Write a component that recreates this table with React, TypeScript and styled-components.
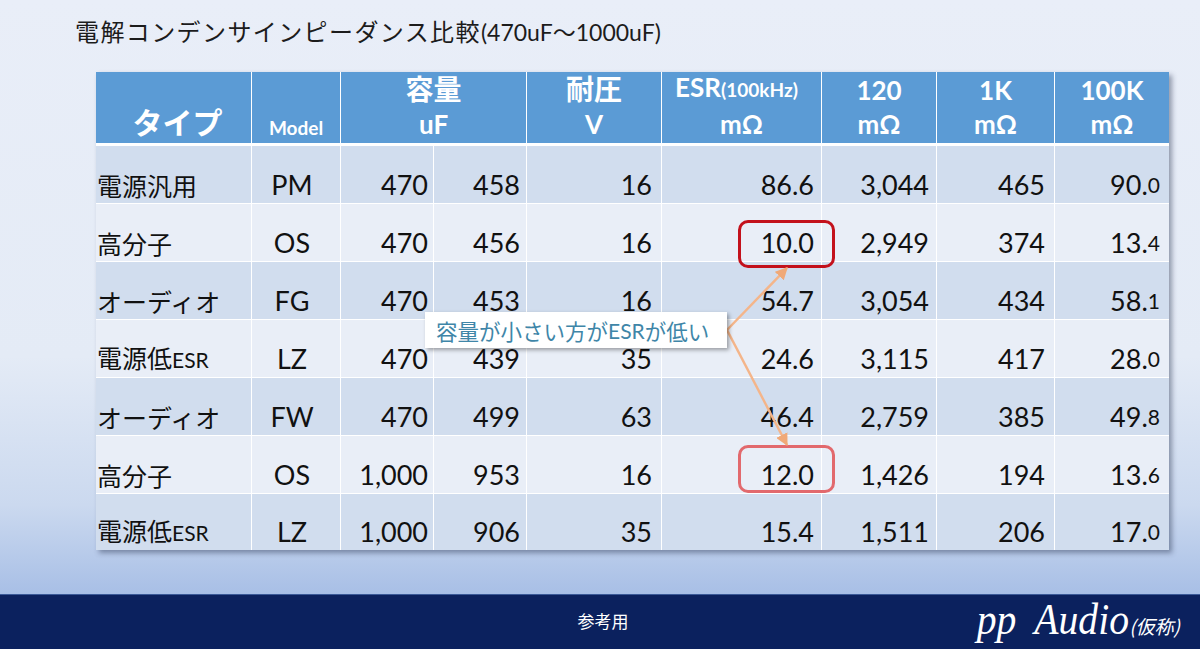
import React from "react";
import styled, { createGlobalStyle } from "styled-components";

const GlobalStyle = createGlobalStyle`
  html, body { margin: 0; padding: 0; }
  body { width: 1200px; height: 649px; overflow: hidden; background: #0b215e; }
  #root { width: 1200px; height: 649px; }
`;

const Slide = styled.div`
  width: 1200px;
  height: 649px;
  display: flex;
  flex-direction: column;
  font-family: Lato, "Noto Sans CJK JP", sans-serif;
`;

const Main = styled.main`
  height: 594px;
  box-sizing: border-box;
  padding: 14px 0 0 75px;
  background: linear-gradient(
    to bottom,
    #e9eef8 0%,
    #e4ebf6 60%,
    #cbd9ef 85%,
    #a8bfe6 100%
  );
`;

const Title = styled.h1`
  margin: 0;
  height: 34px;
  font-family: "Noto Sans CJK JP", sans-serif;
  font-weight: 400;
  font-size: 24px;
  letter-spacing: 1.4px;
  line-height: 34px;
  color: #1c1c1c;
`;

const TitleLatin = styled.span`
  font-family: Lato, "Noto Sans CJK JP", sans-serif;
  font-size: 23px;
  letter-spacing: 0;
`;

const TableWrap = styled.div`
  position: relative;
  margin: 24px 0 0 21px;
  width: 1073px;
`;

const Grid = styled.div`
  display: grid;
  grid-template-columns: 155px 88px 92px 92px 134px 159px 114px 117px 114px;
  grid-template-rows: 73px repeat(6, 57px) 56px;
  gap: 1px;
  background: #ffffff;
  box-shadow: 3px 3px 5px rgba(40, 50, 80, 0.45);
`;

const HeadCell = styled.div<{ $span?: number }>`
  grid-column: span ${(p) => p.$span ?? 1};
  box-sizing: border-box;
  border-bottom: 2px solid #ffffff;
  background: #5b9bd5;
  color: #ffffff;
  font-weight: 700;
  display: flex;
  flex-direction: column;
  justify-content: flex-end;
  align-items: center;
  padding-bottom: 2px;
`;

const HeadLine = styled.div<{ $size?: number; $lh?: number; $shift?: number }>`
  font-size: ${(p) => p.$size ?? 26}px;
  line-height: ${(p) => p.$lh ?? 34}px;
  white-space: nowrap;
  transform: translateX(${(p) => p.$shift ?? 0}px);
`;

const HeadJp = styled.span<{ $size?: number }>`
  font-family: "Noto Sans CJK JP", sans-serif;
  font-size: ${(p) => p.$size ?? 28}px;
  font-weight: 700;
`;

const Small = styled.span<{ $size?: number }>`
  font-size: ${(p) => p.$size ?? 19}px;
`;

const Cell = styled.div<{ $dark: boolean; $align: "left" | "center" | "right"; $pad?: number }>`
  background: ${(p) => (p.$dark ? "#d1ddee" : "#e9eef7")};
  color: #111111;
  display: flex;
  align-items: flex-end;
  justify-content: ${(p) =>
    p.$align === "left" ? "flex-start" : p.$align === "center" ? "center" : "flex-end"};
  padding: ${(p) => (p.$align === "left" ? "0 0 4px 1px" : `0 ${p.$pad ?? 8}px 5px 0`)};
  box-sizing: border-box;
  font-size: 27px;
  line-height: 27px;
  white-space: nowrap;
`;

const TypeText = styled.span`
  font-family: "Noto Sans CJK JP", sans-serif;
  font-size: 25px;
  line-height: 27px;
`;

const TypeSmall = styled.span`
  font-family: Lato, sans-serif;
  font-size: 21px;
`;

const Decimal = styled.span`
  font-size: 21px;
`;

const Highlight = styled.div<{ $color: string; $left: number; $top: number }>`
  position: absolute;
  left: ${(p) => p.$left}px;
  top: ${(p) => p.$top}px;
  width: 97px;
  height: 48px;
  box-sizing: border-box;
  border: 3px solid ${(p) => p.$color};
  border-radius: 10px;
`;

const Callout = styled.div`
  position: absolute;
  left: 329px;
  top: 240px;
  width: 302px;
  height: 36px;
  box-sizing: border-box;
  background: #ffffff;
  box-shadow: 2px 2px 4px rgba(0, 0, 0, 0.35);
  padding-left: 11px;
  display: flex;
  align-items: center;
  font-family: "Noto Sans CJK JP", sans-serif;
  font-size: 21.5px;
  color: #3f86a8;
  white-space: nowrap;
`;

const CalloutLatin = styled.span`
  font-family: Lato, sans-serif;
  font-size: 21px;
`;

const ArrowLayer = styled.svg`
  position: absolute;
  left: 0;
  top: 0;
  pointer-events: none;
  overflow: visible;
`;

const Footer = styled.footer`
  height: 55px;
  box-sizing: border-box;
  border-top: 1px solid #3b5a98;
  background: #0b215e;
  display: grid;
  grid-template-columns: 1fr auto 1fr;
  align-items: center;
  color: #ffffff;
  padding-right: 20px;
`;

const FooterNote = styled.div`
  grid-column: 2;
  font-family: "Noto Sans CJK JP", sans-serif;
  font-size: 17px;
  padding-left: 26px;
  margin-top: -3px;
`;

const Brand = styled.div`
  grid-column: 3;
  justify-self: end;
  display: flex;
  align-items: baseline;
  margin-top: -6px;
`;

const BrandName = styled.span`
  font-family: "Liberation Serif", serif;
  font-style: italic;
  font-size: 45px;
  display: inline-block;
  transform: scaleX(0.88);
  transform-origin: right center;
  word-spacing: 10px;
`;

const BrandNote = styled.span`
  font-family: "Noto Sans CJK JP", sans-serif;
  font-size: 19px;
  font-style: italic;
`;

type Row = {
  type: string;
  typeSmall?: string;
  model: string;
  c1: string;
  c2: string;
  v: string;
  esr: string;
  z120: string;
  z1k: string;
  z100k: [string, string];
};

const rows: Row[] = [
  { type: "電源汎用", model: "PM", c1: "470", c2: "458", v: "16", esr: "86.6", z120: "3,044", z1k: "465", z100k: ["90.", "0"] },
  { type: "高分子", model: "OS", c1: "470", c2: "456", v: "16", esr: "10.0", z120: "2,949", z1k: "374", z100k: ["13.", "4"] },
  { type: "オーディオ", model: "FG", c1: "470", c2: "453", v: "16", esr: "54.7", z120: "3,054", z1k: "434", z100k: ["58.", "1"] },
  { type: "電源低", typeSmall: "ESR", model: "LZ", c1: "470", c2: "439", v: "35", esr: "24.6", z120: "3,115", z1k: "417", z100k: ["28.", "0"] },
  { type: "オーディオ", model: "FW", c1: "470", c2: "499", v: "63", esr: "46.4", z120: "2,759", z1k: "385", z100k: ["49.", "8"] },
  { type: "高分子", model: "OS", c1: "1,000", c2: "953", v: "16", esr: "12.0", z120: "1,426", z1k: "194", z100k: ["13.", "6"] },
  { type: "電源低", typeSmall: "ESR", model: "LZ", c1: "1,000", c2: "906", v: "35", esr: "15.4", z120: "1,511", z1k: "206", z100k: ["17.", "0"] },
];

export default function App() {
  return (
    <>
      <GlobalStyle />
      <Slide>
        <Main>
          <Title>
            電解コンデンサインピーダンス比較<TitleLatin>(470uF～1000uF)</TitleLatin>
          </Title>
          <TableWrap>
            <Grid>
              <HeadCell>
                <HeadLine $lh={34} $shift={4}>
                  <HeadJp $size={30}>タイプ</HeadJp>
                </HeadLine>
              </HeadCell>
              <HeadCell>
                <HeadLine $size={19} $lh={27}>Model</HeadLine>
              </HeadCell>
              <HeadCell $span={2}>
                <HeadLine>
                  <HeadJp>容量</HeadJp>
                </HeadLine>
                <HeadLine>uF</HeadLine>
              </HeadCell>
              <HeadCell>
                <HeadLine>
                  <HeadJp>耐圧</HeadJp>
                </HeadLine>
                <HeadLine>V</HeadLine>
              </HeadCell>
              <HeadCell>
                <HeadLine $shift={-5}>
                  ESR<Small>(100kHz)</Small>
                </HeadLine>
                <HeadLine>mΩ</HeadLine>
              </HeadCell>
              <HeadCell>
                <HeadLine>120</HeadLine>
                <HeadLine>mΩ</HeadLine>
              </HeadCell>
              <HeadCell>
                <HeadLine>1K</HeadLine>
                <HeadLine>mΩ</HeadLine>
              </HeadCell>
              <HeadCell>
                <HeadLine>100K</HeadLine>
                <HeadLine>mΩ</HeadLine>
              </HeadCell>

              {rows.map((r, i) => {
                const dark = i % 2 === 0;
                return (
                  <React.Fragment key={i}>
                    <Cell $dark={dark} $align="left">
                      <TypeText>
                        {r.type}
                        {r.typeSmall && <TypeSmall>{r.typeSmall}</TypeSmall>}
                      </TypeText>
                    </Cell>
                    <Cell $dark={dark} $align="center">{r.model}</Cell>
                    <Cell $dark={dark} $align="right" $pad={5}>{r.c1}</Cell>
                    <Cell $dark={dark} $align="right" $pad={6}>{r.c2}</Cell>
                    <Cell $dark={dark} $align="right" $pad={9}>{r.v}</Cell>
                    <Cell $dark={dark} $align="right" $pad={7}>{r.esr}</Cell>
                    <Cell $dark={dark} $align="right" $pad={7}>{r.z120}</Cell>
                    <Cell $dark={dark} $align="right" $pad={9}>{r.z1k}</Cell>
                    <Cell $dark={dark} $align="right" $pad={9}>
                      {r.z100k[0]}
                      <Decimal>{r.z100k[1]}</Decimal>
                    </Cell>
                  </React.Fragment>
                );
              })}
            </Grid>

            <Highlight $color="#c3111c" $left={642} $top={148} />
            <Highlight $color="#e2696d" $left={642} $top={373} />

            <ArrowLayer width="1073" height="479" viewBox="0 0 1073 479">
              <defs>
                <marker
                  id="ah"
                  viewBox="0 0 10 10"
                  refX="9"
                  refY="5"
                  markerWidth="5"
                  markerHeight="5"
                  orient="auto"
                >
                  <path d="M0 0 L10 5 L0 10 Z" fill="#f0a978" />
                </marker>
              </defs>
              <line
                x1="631"
                y1="258"
                x2="691"
                y2="196"
                stroke="#f4b58a"
                strokeWidth="2.5"
                markerEnd="url(#ah)"
              />
              <line
                x1="631"
                y1="258"
                x2="691"
                y2="373"
                stroke="#f4b58a"
                strokeWidth="2.5"
                markerEnd="url(#ah)"
              />
            </ArrowLayer>

            <Callout>
              容量が小さい方が<CalloutLatin>ESR</CalloutLatin>が低い
            </Callout>
          </TableWrap>
        </Main>
        <Footer>
          <FooterNote>参考用</FooterNote>
          <Brand>
            <BrandName>pp Audio</BrandName>
            <BrandNote>(仮称)</BrandNote>
          </Brand>
        </Footer>
      </Slide>
    </>
  );
}
